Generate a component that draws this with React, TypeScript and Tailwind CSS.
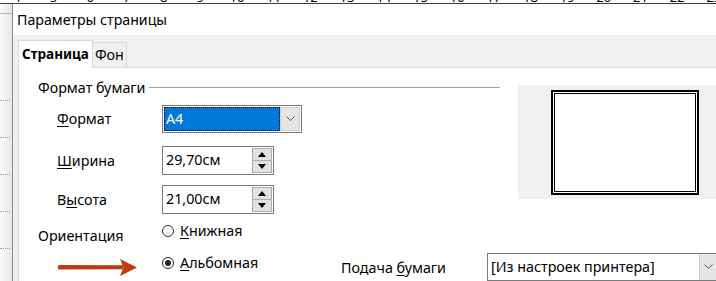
import React from 'react';

const rulerNums = Array.from({ length: 20 }, (_, i) => i + 4);
const dotRows = [0, 1, 2, 3, 4];

function Chevron() {
  return (
    <svg width="9" height="6" viewBox="0 0 9 6">
      <path d="M0.5 0.5 L4.5 4.5 L8.5 0.5" fill="none" stroke="#5a5a5a" strokeWidth="1" />
    </svg>
  );
}

function SpinBox({ value }: { value: string }) {
  return (
    <div className="w-[112px] h-[29px] border border-[#7a7a7a] bg-white flex items-center">
      <span className="pl-[3px] leading-none">{value}</span>
      <div className="ml-auto mr-[1px] w-[20px] h-[25px] flex flex-col">
        <div className="flex-1 border border-[#adadad] bg-[#e1e1e1] flex items-center justify-center">
          <svg width="8" height="5" viewBox="0 0 8 5"><polygon points="0,5 4,0 8,5" fill="#000" /></svg>
        </div>
        <div className="flex-1 border border-t-0 border-[#adadad] bg-[#e1e1e1] flex items-center justify-center">
          <svg width="8" height="5" viewBox="0 0 8 5"><polygon points="0,0 8,0 4,5" fill="#000" /></svg>
        </div>
      </div>
    </div>
  );
}

function Radio({ checked, children }: { checked?: boolean; children: React.ReactNode }) {
  return (
    <div className="flex items-center gap-[6px] h-[20px]">
      {checked ? (
        <div className="w-[12px] h-[12px] rounded-full border-[1.5px] border-[#222] bg-white flex items-center justify-center">
          <div className="w-[6px] h-[6px] rounded-full bg-[#222]" />
        </div>
      ) : (
        <div className="w-[12px] h-[12px] rounded-full border border-[#333] bg-white" />
      )}
      <span>{children}</span>
    </div>
  );
}

export default function App() {
  return (
    <div className="w-[716px] h-[281px] overflow-hidden bg-white flex flex-col text-black text-[14.3px] font-['Noto_Sans',sans-serif]">
      {/* линейка сверху */}
      <div className="h-[4px] shrink-0 border-b border-[#3c3c3c] overflow-hidden">
        <div className="flex -mt-[10px] ml-[-1.5px] text-[13px] leading-[15px]">
          {rulerNums.map((n) => (
            <span key={n} className="w-[36.7px] shrink-0 text-center">{n}</span>
          ))}
        </div>
      </div>

      <div className="flex flex-1 min-h-0">
        {/* левая полоса документа */}
        <div className="w-[13px] shrink-0 bg-gradient-to-r from-[#fbfbfb] to-[#e6e6e6] border-r border-[#8a8a8a] flex flex-col">
          <div className="mt-[9px] h-px bg-[#b4b4b4]" />
          {dotRows.map((i) => (
            <div key={i} className={`${i === 0 ? 'mt-[86px]' : 'mt-[36px]'} w-[10px] border-t border-dotted border-[#9a9a9a]`} />
          ))}
        </div>

        {/* диалог */}
        <div className="flex-1 min-w-0 flex flex-col">
          <div className="h-[31px] shrink-0 bg-white flex items-center pl-[4px] text-[14.2px]">
            Параметры страницы
          </div>

          <div className="flex-1 bg-[#f0f0f0] pl-[5px] flex flex-col">
            <div className="h-[32px] shrink-0 flex items-end">
              <div className="relative z-10 -mb-px h-[28px] px-[3px] bg-white border border-b-0 border-[#d9d9d9] flex items-center font-bold text-[13.5px]">
                Страница
              </div>
              <div className="h-[25px] px-[2px] border border-b-0 border-l-0 border-[#d9d9d9] flex items-center">
                Фон
              </div>
            </div>

            <div className="flex-1 bg-white border-t border-l border-[#d9d9d9] pl-[19px] pt-[10px]">
              <div className="flex items-start">
                <div className="w-[462px] shrink-0">
                  <div className="h-[20px] flex items-center">
                    <span>Формат бумаги</span>
                    <div className="flex-1 h-px bg-[#a0a0a0] ml-[4px] -mt-[2px]" />
                  </div>

                  <div className="mt-[7px] h-[28px] flex items-center">
                    <div className="w-[124px] pl-[19px]"><u className="underline-offset-2">Ф</u>ормат</div>
                    <div className="w-[140px] h-[28px] border border-[#7a7a7a] bg-white p-px flex">
                      <div className="flex-1 bg-[#0078d7] border border-dotted border-[#111] flex items-center pl-[1px] text-white">
                        А4
                      </div>
                      <div className="w-[20px] bg-[#e5e5e5] border border-[#d0d0d0] flex items-center justify-center">
                        <Chevron />
                      </div>
                    </div>
                  </div>

                  <div className="mt-[13px] flex items-center">
                    <div className="w-[124px] pl-[19px]"><u className="underline-offset-2">Ш</u>ирина</div>
                    <SpinBox value="29,70см" />
                  </div>

                  <div className="mt-[10px] flex items-center">
                    <div className="w-[124px] pl-[19px]">В<u className="underline-offset-2">ы</u>сота</div>
                    <SpinBox value="21,00см" />
                  </div>

                  <div className="mt-[7px] flex items-start">
                    <div className="w-[124px] pt-[5px] leading-[20px]">Ориентация</div>
                    <Radio><u className="underline-offset-2">К</u>нижная</Radio>
                  </div>
                </div>

                <div className="ml-[18px] mt-[7px] w-[213px] h-[114px] shrink-0 bg-[#f0f0f0] flex items-center justify-center">
                  <div className="w-[148px] h-[105px] border-2 border-black bg-white p-px">
                    <div className="w-full h-full border border-black" />
                  </div>
                </div>
              </div>

              <div className="mt-[7px] h-[28px] flex items-center">
                <div className="w-[124px] shrink-0 pl-[19px] flex items-center">
                  <svg width="80" height="17" viewBox="0 0 80 17">
                    <path d="M1 7.2 Q1 6.2 3 6.1 L66 6.3 L66 10.3 L3 10.6 Q1 10.5 1 9.6 Z" fill="#bf3a0c" />
                    <polygon points="63,0 80,8.5 63,17 66.5,8.5" fill="#bf3a0c" />
                  </svg>
                </div>
                <div className="w-[179px] shrink-0 -mt-[8px]">
                  <Radio checked><u className="underline-offset-2">А</u>льбомная</Radio>
                </div>
                <div className="w-[146px] shrink-0 mt-[2px]">Подача <u className="underline-offset-2">б</u>умаги</div>
                <div className="w-[230px] h-[28px] shrink-0 border border-[#7a7a7a] bg-white flex items-center">
                  <span className="pl-[3px]">[Из настроек принтера]</span>
                  <div className="ml-auto w-[17px] h-full bg-[#e5e5e5] border-l border-[#d0d0d0] flex items-center justify-center">
                    <Chevron />
                  </div>
                </div>
              </div>
            </div>
          </div>
        </div>
      </div>
    </div>
  );
}
